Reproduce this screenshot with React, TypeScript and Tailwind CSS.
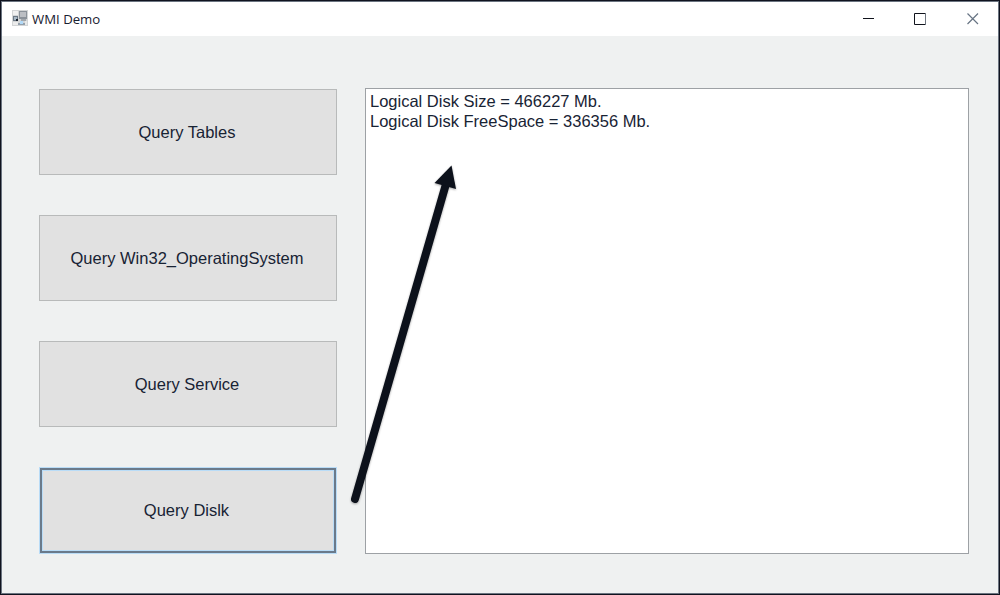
const queries = [
  { label: "Query Tables" },
  { label: "Query Win32_OperatingSystem" },
  { label: "Query Service" },
  { label: "Query Dislk", focused: true },
];

const results = [
  "Logical Disk Size = 466227 Mb.",
  "Logical Disk FreeSpace = 336356 Mb.",
];

function FormIcon() {
  return (
    <svg width="16" height="16" viewBox="0 0 16 16" className="-mt-0.5" shapeRendering="crispEdges">
      <rect width="16" height="16" fill="#d3d5d6" />
      <rect x="1" y="1" width="5" height="4" fill="#f0f0f0" />
      <rect x="7" y="1" width="8" height="8" fill="#8b929a" />
      <rect x="8" y="2" width="6" height="5" fill="#bcbfc4" />
      <rect x="9" y="9" width="5" height="2" fill="#a1a6ac" />
      <rect x="1" y="6" width="5" height="5" fill="#6d7986" />
      <rect x="2" y="7" width="3" height="3" fill="#a9b9c6" />
      <rect x="4" y="9" width="2" height="2" fill="#1b232e" />
      <rect x="1" y="12" width="5" height="3" fill="#ececec" />
      <rect x="6" y="13" width="7" height="2" fill="#94a0ac" />
      <rect x="8" y="11" width="3" height="3" fill="#b2daf8" />
      <rect x="13" y="11" width="2" height="4" fill="#e7e8e8" />
    </svg>
  );
}

function TitleBar() {
  return (
    <header className="flex h-[34px] shrink-0 items-center justify-between bg-white pl-2.5 pr-[19px]">
      <div className="flex items-center gap-1">
        <FormIcon />
        <h1 className="font-['Open_Sans',sans-serif] text-[13.2px] leading-4 text-[#182030]">WMI Demo</h1>
      </div>
      <div className="flex items-center pb-px">
        <button aria-label="Minimize" className="mr-[39px] block">
          <svg width="12" height="12" viewBox="0 0 12 12"><path d="M0 5.500H11" stroke="#10131c" /></svg>
        </button>
        <button aria-label="Maximize" className="mr-[41px] block">
          <svg width="12" height="12" viewBox="0 0 12 12" fill="none">
            <path d="M11.500 .5H.5V11.500H11.500" stroke="#10131c" />
            <path d="M11.500 0V12" stroke="#6f7680" />
          </svg>
        </button>
        <button aria-label="Close" className="block">
          <svg width="12" height="12" viewBox="0 0 12 12"><path d="M.5 .5L11 11M11 .5L.5 11" stroke="#677484" strokeWidth="1.2" /></svg>
        </button>
      </div>
    </header>
  );
}

function QueryButton({ label, focused }: { label: string; focused?: boolean }) {
  return (
    <button
      className={
        focused
          ? "h-[87px] border border-[#b9dcf7] bg-[#e1e1e1] pr-[3px] shadow-[inset_0_0_0_2px_#6a7a8b,inset_0_0_0_3px_#b9dcf7]"
          : "h-[86px] border border-[#b8baba] bg-[#e1e1e1] pr-0.5 pt-px"
      }
    >
      {label}
    </button>
  );
}

export default function App() {
  return (
    <div className="relative flex h-[595px] w-[1000px] flex-col overflow-hidden border border-[#10131f] bg-[#eff1f1] font-['Liberation_Sans',Arial,sans-serif] text-[16.5px] text-[#182334]">
      <div className="flex flex-1 flex-col border border-[#6b7480]">
        <TitleBar />
        <main className="flex gap-7 pl-[37px] pt-[52px]">
          <div className="flex w-[298px] flex-col gap-10 pt-px">
            {queries.map((q) => (
              <QueryButton key={q.label} label={q.label} focused={q.focused} />
            ))}
          </div>
          <div className="h-[466px] w-[604px] border border-[#9da1a5] bg-white pl-1 pt-0.5 leading-5">
            {results.map((line) => (
              <p key={line}>{line}</p>
            ))}
          </div>
        </main>
      </div>
      <svg className="absolute left-[339px] top-[155px] drop-shadow-[0_1px_1px_rgba(0,0,0,0.35)]" width="130" height="360" viewBox="340 156 130 360">
        <path d="M355 499L446 184" stroke="#0c111b" strokeWidth="8" strokeLinecap="round" />
        <path d="M451.500 165.500L456 189L434.500 183Z" fill="#0c111b" />
      </svg>
    </div>
  );
}
